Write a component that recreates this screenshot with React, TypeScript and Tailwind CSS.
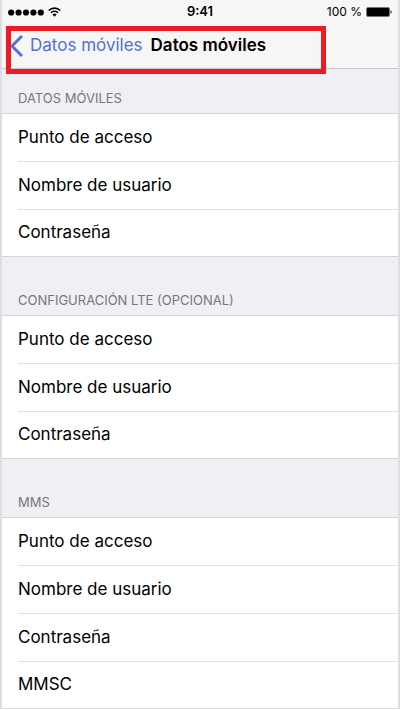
import { useId } from 'react'

interface Section {
  id: string
  title: string
  fields: string[]
}

const sections: Section[] = [
  {
    id: 'data',
    title: 'Datos móviles',
    fields: ['Punto de acceso', 'Nombre de usuario', 'Contraseña'],
  },
  {
    id: 'lte',
    title: 'Configuración LTE (opcional)',
    fields: ['Punto de acceso', 'Nombre de usuario', 'Contraseña'],
  },
  {
    id: 'mms',
    title: 'MMS',
    fields: ['Punto de acceso', 'Nombre de usuario', 'Contraseña', 'MMSC'],
  },
]

function StatusBar() {
  return (
    <div className="grid grid-cols-3 items-center h-6 px-1.5 text-black">
      <div className="flex items-center gap-1">
        <svg className="w-9 h-[7px]" viewBox="0 0 36 7" fill="currentColor">
          {[...Array(5)].map((_, i) => (
            <circle key={i} cx={3.2 + i * 7.4} cy="3.5" r="3.1" />
          ))}
        </svg>
        <svg className="w-[13px] h-[10px]" viewBox="0 0 13 10" fill="none" stroke="currentColor" strokeWidth="1.6">
          <path d="M0.7 3.5a8.2 8.2 0 0 1 11.6 0" />
          <path d="M2.9 5.8a5.1 5.1 0 0 1 7.2 0" />
          <path d="M6.5 9.8L4.4 7.6a3 3 0 0 1 4.2 0z" fill="currentColor" stroke="none" />
        </svg>
      </div>
      <span className="text-center text-[13px] font-semibold">9:41</span>
      <div className="flex items-center justify-end gap-1">
        <span className="text-xs">100 %</span>
        <svg className="w-[26px] h-[10px]" viewBox="0 0 26 10">
          <rect x="0.5" y="0.5" width="23" height="9" rx="1.5" fill="#000" stroke="#777" />
          <path d="M24.5 3.2c1.6.5 1.6 3.1 0 3.6z" fill="#222" />
        </svg>
      </div>
    </div>
  )
}

function NavBar() {
  return (
    <nav className="relative flex items-center h-11 pl-2 gap-2">
      <a href="#" className="flex items-center gap-[7px] text-[17px] text-[#5272d0]">
        <svg className="w-[13px] h-[22px]" viewBox="0 0 13 22" fill="none" stroke="currentColor" strokeWidth="3">
          <path d="M12 1L2 11l10 10" />
        </svg>
        Datos móviles
      </a>
      <h1 className="text-[17px] font-semibold text-black">Datos móviles</h1>
      {/* highlight around the navigation title */}
      <div className="absolute left-[4px] top-[2px] w-80 h-12 border-[5px] border-[#ed1c24]"></div>
    </nav>
  )
}

function FieldRow({ label, last }: { label: string; last: boolean }) {
  const id = useId()

  return (
    <li className={last ? 'flex h-[46px]' : 'flex h-12 border-b border-[#e0e0e2]'}>
      <label htmlFor={id} className="flex items-center text-[17px] text-black">
        {label}
      </label>
      <input id={id} type="text" className="flex-1 min-w-0 px-4 text-[17px] outline-none" />
    </li>
  )
}

export default function App() {
  return (
    <div className="bg-white font-['Inter','Liberation_Sans',sans-serif]">
      <main className="border-x-2 border-b border-[#dedee0] bg-[#efeff4]">
        <header className="border-b border-[#c8c8cc] bg-[#f6f6f7]">
          <StatusBar />
          <NavBar />
        </header>

        {sections.map((section, i) => (
          <section key={section.id}>
            <h2
              className={`flex items-end px-4 pb-[5px] text-[13px] uppercase text-[#77777c] ${
                i === 0 ? 'h-11' : 'h-[58px]'
              }`}
            >
              {section.title}
            </h2>
            <ul className={`border-t border-[#d6d6da] bg-white pl-4 ${i < sections.length - 1 ? 'border-b' : ''}`}>
              {section.fields.map((field, j) => (
                <FieldRow key={field} label={field} last={j === section.fields.length - 1} />
              ))}
            </ul>
          </section>
        ))}
      </main>
    </div>
  )
}
